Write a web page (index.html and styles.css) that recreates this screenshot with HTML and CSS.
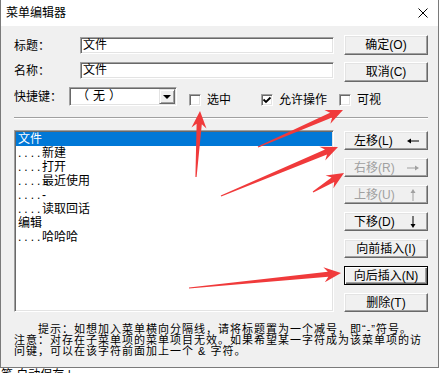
FILE: index.html
```html
<!DOCTYPE html>
<html lang="zh-CN">
<head>
  <meta charset="UTF-8" />
  <title>菜单编辑器</title>
  <link rel="stylesheet" href="styles.css">
</head>
<body>
  <div class="window">
    <div class="titlebar">
      <span class="title">菜单编辑器</span>
      <svg class="close" width="10" height="10" viewBox="0 0 10 10"><path d="M0.5 0.5L9.5 9.5M9.5 0.5L0.5 9.5" stroke="#000" stroke-width="1"/></svg>
    </div>

    <div class="client">
      <div class="top">
        <div class="fields">
          <div class="field">
            <span class="field-label">标题：</span>
            <div class="text-input">文件</div>
          </div>
          <div class="field">
            <span class="field-label">名称：</span>
            <div class="text-input">文件</div>
          </div>
          <div class="field">
            <span class="field-label short">快捷键：</span>
            <div class="select">
              <span class="select-value">（无）</span>
              <span class="drop"><span class="drop-arrow"></span></span>
            </div>
            <div class="checks">
              <label class="check"><span class="box"></span>选中</label>
              <label class="check"><span class="box"><svg width="10" height="10" viewBox="0 0 10 10"><path d="M1.5 4.5L4 7L8.5 2.5" fill="none" stroke="#000" stroke-width="1.8"/></svg></span>允许操作</label>
              <label class="check"><span class="box"></span>可视</label>
            </div>
          </div>
        </div>
        <div class="side side-top">
          <button class="btn tall">确定(O)</button>
          <button class="btn tall">取消(C)</button>
        </div>
      </div>

      <div class="sep"></div>

      <div class="middle">
        <div class="list">
          <div class="list-item selected">文件</div>
          <div class="list-item"><span class="dots">....</span>新建</div>
          <div class="list-item"><span class="dots">....</span>打开</div>
          <div class="list-item"><span class="dots">....</span>最近使用</div>
          <div class="list-item"><span class="dots">....</span>-</div>
          <div class="list-item"><span class="dots">....</span>读取回话</div>
          <div class="list-item">编辑</div>
          <div class="list-item"><span class="dots">....</span>哈哈哈</div>
        </div>
        <div class="side">
          <button class="btn split">左移(L)
            <svg class="arr" width="12" height="12" viewBox="0 0 12 12"><path d="M2 6H12" stroke="currentColor"/><path d="M0 6L4 3.5V8.5Z" fill="currentColor"/></svg>
          </button>
          <button class="btn split" disabled>右移(R)
            <svg class="arr" width="12" height="12" viewBox="0 0 12 12"><path d="M0 6H10" stroke="currentColor"/><path d="M12 6L8 3.5V8.5Z" fill="currentColor"/></svg>
          </button>
          <button class="btn split" disabled>上移(U)
            <svg class="arr" width="12" height="12" viewBox="0 0 12 12"><path d="M6 2V12" stroke="currentColor"/><path d="M6 0L3.5 4H8.5Z" fill="currentColor"/></svg>
          </button>
          <button class="btn split">下移(D)
            <svg class="arr" width="12" height="12" viewBox="0 0 12 12"><path d="M6 0V10" stroke="currentColor"/><path d="M6 12L3.5 8H8.5Z" fill="currentColor"/></svg>
          </button>
          <button class="btn">向前插入(I)</button>
          <button class="btn default">向后插入(N)</button>
          <button class="btn">删除(T)</button>
        </div>
      </div>

      <p class="hint">提示：如想加入菜单横向分隔线，请将标题置为一个减号，即“-”符号。<br>注意：对存在子菜单项的菜单项目无效。如果希望某一字符成为该菜单项的访<br>问键，可以在该字符前面加上一个 &amp; 字符。</p>
    </div>
  </div>
  <div class="below">笔 自动保存 |</div>

  <svg id="marks" class="marks" width="441" height="373"></svg>

  <script>
    // red annotation arrows: tail x, tail y, tip x, tip y
    var arrows = [
      [196, 177, 200, 111],
      [258, 147, 343, 110],
      [221, 196, 338, 147],
      [313, 192, 344, 173],
      [189, 288, 341, 273]
    ];
    var marks = document.getElementById('marks');
    arrows.forEach(function (a) {
      var dx = a[2] - a[0], dy = a[3] - a[1];
      var len = Math.sqrt(dx * dx + dy * dy);
      var ang = Math.atan2(dy, dx) * 180 / Math.PI;
      var p = document.createElementNS('http://www.w3.org/2000/svg', 'polygon');
      p.setAttribute('points', [
        '0,0.6', (len - 13) + ',2.6', (len - 17) + ',7.5', len + ',0',
        (len - 17) + ',-7.5', (len - 13) + ',-2.6', '0,-0.6'
      ].join(' '));
      p.setAttribute('transform', 'translate(' + a[0] + ' ' + a[1] + ') rotate(' + ang + ')');
      marks.appendChild(p);
    });
  </script>
</body>
</html>
```

FILE: styles.css
```css
* {
  box-sizing: border-box;
}
body {
  margin: 0;
  background: #fff;
  font-family: "Liberation Sans", "Noto Sans CJK SC", sans-serif;
  font-size: 12px;
  color: #000;
}
.window {
  width: 439px;
  border: 1px solid #7a7a7a;
  border-top: 0;
  background: #f0f0f0;
}
.titlebar {
  height: 26px;
  background: #fff;
  display: flex;
  align-items: center;
  justify-content: space-between;
  padding: 0 10px 0 5px;
}
.title {
  line-height: 26px;
}
.close {
  display: block;
}
.client {
  padding: 9px 10px 10px 13px;
}
.top {
  display: flex;
  justify-content: space-between;
}
.fields {
  width: 320px;
  padding-top: 2px;
  display: flex;
  flex-direction: column;
  gap: 8px;
}
.field {
  display: flex;
  align-items: center;
  line-height: 14px;
  white-space: nowrap;
}
.field-label {
  width: 66px;
  flex-shrink: 0;
}
.field-label.short {
  width: 55px;
}
.text-input {
  width: 254px;
  height: 17px;
  background: #fff;
  border: 1px solid;
  border-color: #a0a0a0 #fff #fff #a0a0a0;
  box-shadow: inset 1px 1px #696969, inset -1px -1px #e3e3e3;
  padding: 0 2px;
  line-height: 15px;
}
.select {
  width: 108px;
  height: 19px;
  flex-shrink: 0;
  background: #fff;
  border: 1px solid;
  border-color: #a0a0a0 #fff #fff #a0a0a0;
  box-shadow: inset 1px 1px #696969, inset -1px -1px #e3e3e3;
  padding: 1px 1px 1px 2px;
  display: flex;
  justify-content: space-between;
}
.select-value {
  line-height: 15px;
  padding-left: 5px;
  letter-spacing: 4px;
}
.drop {
  width: 16px;
  height: 15px;
  background: #f0f0f0;
  border: 1px solid;
  border-color: #e3e3e3 #696969 #696969 #e3e3e3;
  box-shadow: inset 1px 1px #fff, inset -1px -1px #a0a0a0;
  display: flex;
  align-items: center;
  justify-content: center;
}
.drop-arrow {
  width: 0;
  height: 0;
  border-left: 4px solid transparent;
  border-right: 4px solid transparent;
  border-top: 4px solid #000;
}
.checks {
  align-self: flex-end;
  flex-shrink: 0;
  margin-left: 12px;
  display: grid;
  grid-template-columns: 72px 78px 60px;
}
.check {
  display: flex;
  align-items: center;
  gap: 6px;
  height: 12px;
  line-height: 12px;
}
.box {
  width: 12px;
  height: 12px;
  flex-shrink: 0;
  background: #fff;
  border: 1px solid;
  border-color: #a0a0a0 #fff #fff #a0a0a0;
  box-shadow: inset 1px 1px #696969, inset -1px -1px #e3e3e3;
  display: flex;
  align-items: center;
  justify-content: center;
}
.box svg {
  display: block;
}
.side {
  width: 84px;
  flex-shrink: 0;
  display: flex;
  flex-direction: column;
  gap: 8px;
  padding-top: 1px;
}
.side-top {
  gap: 7px;
  padding-top: 0;
}
.btn {
  height: 19px;
  margin: 0;
  padding: 0;
  font: inherit;
  color: #000;
  line-height: 12px;
  background: #f0f0f0;
  border: 1px solid;
  border-color: #fff #696969 #696969 #fff;
  box-shadow: inset -1px -1px #a0a0a0, inset 1px 1px #e3e3e3;
  display: flex;
  align-items: center;
  justify-content: center;
}
.btn.tall {
  height: 20px;
}
.btn.split {
  justify-content: space-between;
  padding: 0 8px 0 9px;
}
.btn:disabled {
  color: #a0a0a0;
}
.btn.default {
  border-color: #000;
  box-shadow: inset 1px 1px #fff, inset -1px -1px #696969, inset -2px -2px #a0a0a0;
}
.arr {
  display: block;
}
.sep {
  height: 2px;
  margin-top: 11px;
  border-top: 1px solid #a0a0a0;
  border-bottom: 1px solid #fff;
}
.middle {
  margin-top: 11px;
  display: flex;
  justify-content: space-between;
}
.list {
  width: 320px;
  height: 182px;
  background: #fff;
  border: 1px solid;
  border-color: #a0a0a0 #fff #fff #a0a0a0;
  box-shadow: inset 1px 1px #696969, inset -1px -1px #e3e3e3;
  padding: 1px;
}
.list-item {
  height: 14px;
  line-height: 14px;
  padding-left: 2px;
  white-space: nowrap;
}
.list-item.selected {
  background: #0078d7;
  color: #fff;
}
.dots {
  display: inline-block;
  width: 24px;
  letter-spacing: 3px;
}
.hint {
  margin: 12px 0 0;
  font-size: 11px;
  letter-spacing: 1px;
  line-height: 11px;
  text-indent: 24px;
  white-space: nowrap;
}
.below {
  width: 90px;
  height: 6px;
  overflow: hidden;
  line-height: 14px;
  padding-left: 1px;
}
.marks {
  position: absolute;
  top: 0;
  left: 0;
  pointer-events: none;
  fill: #f03a3b;
}
```
